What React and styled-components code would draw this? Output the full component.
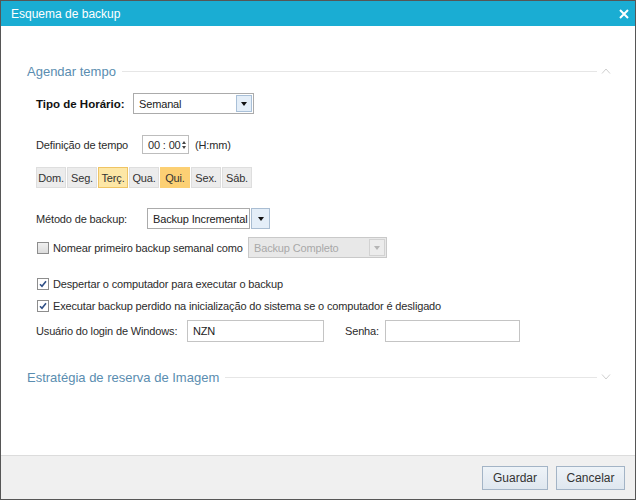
import React from 'react';
import styled, { createGlobalStyle } from 'styled-components';

const GlobalStyle = createGlobalStyle`
  html, body {
    margin: 0;
    padding: 0;
    background: #fff;
  }
  body {
    font-family: "Liberation Sans", Arial, sans-serif;
    font-size: 11px;
    letter-spacing: -0.15px;
    color: #2b2b2b;
    white-space: nowrap;
  }
`;

const Window = styled.div`
  width: 636px;
  height: 500px;
  box-sizing: border-box;
  border: 1px solid #565656;
  display: flex;
  flex-direction: column;
  background: #fff;
`;

const TitleBar = styled.div`
  height: 25px;
  flex-shrink: 0;
  background: #1aadd3;
  color: #fff;
  display: flex;
  align-items: center;
  justify-content: space-between;
  padding: 0 6px 0 10px;
  font-size: 12px;
  letter-spacing: 0;
`;

const CloseIcon = styled.svg`
  width: 10px;
  height: 10px;
`;

const Body = styled.div`
  flex: 1;
  display: flex;
  flex-direction: column;
  padding: 36px 24px 0 26px;
`;

const SectionHeader = styled.div`
  display: flex;
  align-items: center;
  height: 18px;
  margin-top: ${(p) => p.$mt || 0}px;
  font-size: 13px;
  letter-spacing: 0;
  color: #5a8db0;
`;

const HeaderLine = styled.span`
  flex: 1;
  height: 1px;
  background: #e6e6e6;
  margin-left: 6px;
`;

const Caret = styled.svg`
  width: 10px;
  height: 6px;
  margin-left: 4px;
`;

const Section = styled.div`
  display: flex;
  flex-direction: column;
  padding-left: 9px;
`;

const Row = styled.div`
  display: flex;
  align-items: center;
  height: ${(p) => p.$h || 21}px;
  margin-top: ${(p) => p.$mt || 0}px;
`;

const Label = styled.span`
  width: ${(p) => (p.$w ? `${p.$w}px` : 'auto')};
  margin-left: ${(p) => p.$ml || 0}px;
  flex-shrink: 0;
  font-weight: ${(p) => (p.$bold ? 700 : 400)};
  color: ${(p) => (p.$bold ? '#111' : '#2b2b2b')};
  font-size: ${(p) => (p.$bold ? 11.5 : 11)}px;
  letter-spacing: ${(p) => (p.$bold ? 0 : -0.15)}px;
`;

const SelectBox = styled.div`
  display: flex;
  flex-shrink: 0;
  width: ${(p) => p.$w}px;
  height: 21px;
  box-sizing: border-box;
  border: 1px solid ${(p) => (p.$disabled ? '#c9c9c9' : '#ababab')};
  background: ${(p) => (p.$disabled ? '#e8e8e8' : '#fff')};
`;

const SelectText = styled.span`
  flex: 1;
  display: flex;
  align-items: center;
  padding-left: 5px;
  overflow: hidden;
  color: ${(p) => (p.$disabled ? '#a9a9a9' : '#222')};
`;

const DropButton = styled.span`
  width: 16px;
  margin: 1px;
  box-sizing: border-box;
  display: flex;
  align-items: center;
  justify-content: center;
  border: 1px solid ${(p) => (p.$disabled ? '#d2d2d2' : '#a9c0d8')};
  background: ${(p) => (p.$disabled ? '#ececec' : '#e4eef8')};
`;

const SplitButton = styled.span`
  width: 19px;
  height: 21px;
  box-sizing: border-box;
  margin-left: 1px;
  display: flex;
  align-items: center;
  justify-content: center;
  border: 1px solid #a9bdd2;
  background: #e4eef8;
`;

const Arrow = styled.span`
  width: 0;
  height: 0;
  border-left: 3.5px solid transparent;
  border-right: 3.5px solid transparent;
  border-top: 4px solid ${(p) => (p.$disabled ? '#b5b5b5' : '#111')};
`;

const TimeBox = styled.div`
  display: flex;
  align-items: center;
  height: 19px;
  width: 47px;
  flex-shrink: 0;
  box-sizing: border-box;
  border: 1px solid #bdbdbd;
  padding-left: 5px;
`;

const Spinner = styled.span`
  display: flex;
  flex-direction: column;
  gap: 2px;
  margin-left: auto;
  margin-right: 2px;
`;

const SpinUp = styled.span`
  width: 0;
  height: 0;
  border-left: 2.5px solid transparent;
  border-right: 2.5px solid transparent;
  border-bottom: 3px solid #444;
`;

const SpinDown = styled(SpinUp)`
  border-bottom: none;
  border-top: 3px solid #444;
`;

const Hint = styled.span`
  margin-left: 6px;
`;

const DayGroup = styled.div`
  display: flex;
  gap: 1px;
`;

const dayBg = { off: '#ececec', on: '#fde7a6', hot: '#fcd074' };
const dayBorder = { off: '#dedede', on: '#efc464', hot: '#fcd074' };

const DayButton = styled.span`
  width: 30px;
  height: 21px;
  box-sizing: border-box;
  display: flex;
  align-items: center;
  justify-content: center;
  background: ${(p) => dayBg[p.$state]};
  border: 1px solid ${(p) => dayBorder[p.$state]};
  color: #333;
`;

const Check = styled.span`
  width: 12px;
  height: 12px;
  box-sizing: border-box;
  flex-shrink: 0;
  border: 1px solid #8d8d8d;
  background: ${(p) => (p.$checked ? '#fff' : 'linear-gradient(#f0f0f0, #dcdcdc)')};
  display: flex;
  align-items: center;
  justify-content: center;
  margin: 0 4px 0 1px;
`;

const TextInput = styled.div`
  width: ${(p) => p.$w}px;
  height: 22px;
  flex-shrink: 0;
  box-sizing: border-box;
  border: 1px solid #c4c4c4;
  display: flex;
  align-items: center;
  padding-left: 5px;
  color: #222;
`;

const Footer = styled.div`
  height: 43px;
  flex-shrink: 0;
  background: #f0f0f0;
  border-top: 1px solid #dcdcdc;
  display: flex;
  align-items: center;
  justify-content: flex-end;
  gap: 8px;
  padding-right: 10px;
`;

const Button = styled.button`
  width: ${(p) => p.$w}px;
  height: 24px;
  border: 1px solid #a3b4c6;
  background: linear-gradient(#eef3f8, #dfe7ef);
  font-family: "Liberation Sans", Arial, sans-serif;
  font-size: 12px;
  color: #333;
  padding: 0;
`;

const CheckMark = () => (
  <svg width="8" height="8" viewBox="0 0 8 8">
    <path d="M1 4.2 L3 6.3 L7 1.3" fill="none" stroke="#2f4f86" strokeWidth="1.6" />
  </svg>
);

const days = [
  ['Dom.', 'off'],
  ['Seg.', 'off'],
  ['Terç.', 'on'],
  ['Qua.', 'off'],
  ['Qui.', 'hot'],
  ['Sex.', 'off'],
  ['Sáb.', 'off'],
];

export default function App() {
  return (
    <>
      <GlobalStyle />
      <Window>
        <TitleBar>
          <span>Esquema de backup</span>
          <CloseIcon viewBox="0 0 10 10">
            <path d="M1 1 L9 9 M9 1 L1 9" stroke="#fff" strokeWidth="2" />
          </CloseIcon>
        </TitleBar>
        <Body>
          <SectionHeader>
            <span>Agendar tempo</span>
            <HeaderLine />
            <Caret viewBox="0 0 10 6">
              <polyline points="1,5.5 5,1 9,5.5" fill="none" stroke="#cfcfcf" strokeWidth="1" />
            </Caret>
          </SectionHeader>
          <Section>
            <Row $mt={13}>
              <Label $bold $w={97}>Tipo de Horário:</Label>
              <SelectBox $w={121}>
                <SelectText>Semanal</SelectText>
                <DropButton>
                  <Arrow />
                </DropButton>
              </SelectBox>
            </Row>
            <Row $mt={21} $h={19}>
              <Label $w={106}>Definição de tempo</Label>
              <TimeBox>
                00 : 00
                <Spinner>
                  <SpinUp />
                  <SpinDown />
                </Spinner>
              </TimeBox>
              <Hint>(H:mm)</Hint>
            </Row>
            <Row $mt={13}>
              <DayGroup>
                {days.map(([d, s]) => (
                  <DayButton key={d} $state={s}>
                    {d}
                  </DayButton>
                ))}
              </DayGroup>
            </Row>
            <Row $mt={20}>
              <Label $w={111}>Método de backup:</Label>
              <SelectBox $w={103}>
                <SelectText>Backup Incremental</SelectText>
              </SelectBox>
              <SplitButton>
                <Arrow />
              </SplitButton>
            </Row>
            <Row $mt={8}>
              <Check />
              <Label $w={195}>Nomear primeiro backup semanal como</Label>
              <SelectBox $w={139} $disabled>
                <SelectText $disabled>Backup Completo</SelectText>
                <DropButton $disabled>
                  <Arrow $disabled />
                </DropButton>
              </SelectBox>
            </Row>
            <Row $mt={18} $h={16}>
              <Check $checked>
                <CheckMark />
              </Check>
              <Label>Despertar o computador para executar o backup</Label>
            </Row>
            <Row $mt={6} $h={16}>
              <Check $checked>
                <CheckMark />
              </Check>
              <Label>Executar backup perdido na inicialização do sistema se o computador é desligado</Label>
            </Row>
            <Row $mt={6} $h={22}>
              <Label $w={151}>Usuário do login de Windows:</Label>
              <TextInput $w={137}>NZN</TextInput>
              <Label $w={40} $ml={21}>Senha:</Label>
              <TextInput $w={135} />
            </Row>
          </Section>
          <SectionHeader $mt={26}>
            <span>Estratégia de reserva de Imagem</span>
            <HeaderLine />
            <Caret viewBox="0 0 10 6">
              <polyline points="1,0.5 5,5 9,0.5" fill="none" stroke="#cfcfcf" strokeWidth="1" />
            </Caret>
          </SectionHeader>
        </Body>
        <Footer>
          <Button $w={66}>Guardar</Button>
          <Button $w={69}>Cancelar</Button>
        </Footer>
      </Window>
    </>
  );
}
